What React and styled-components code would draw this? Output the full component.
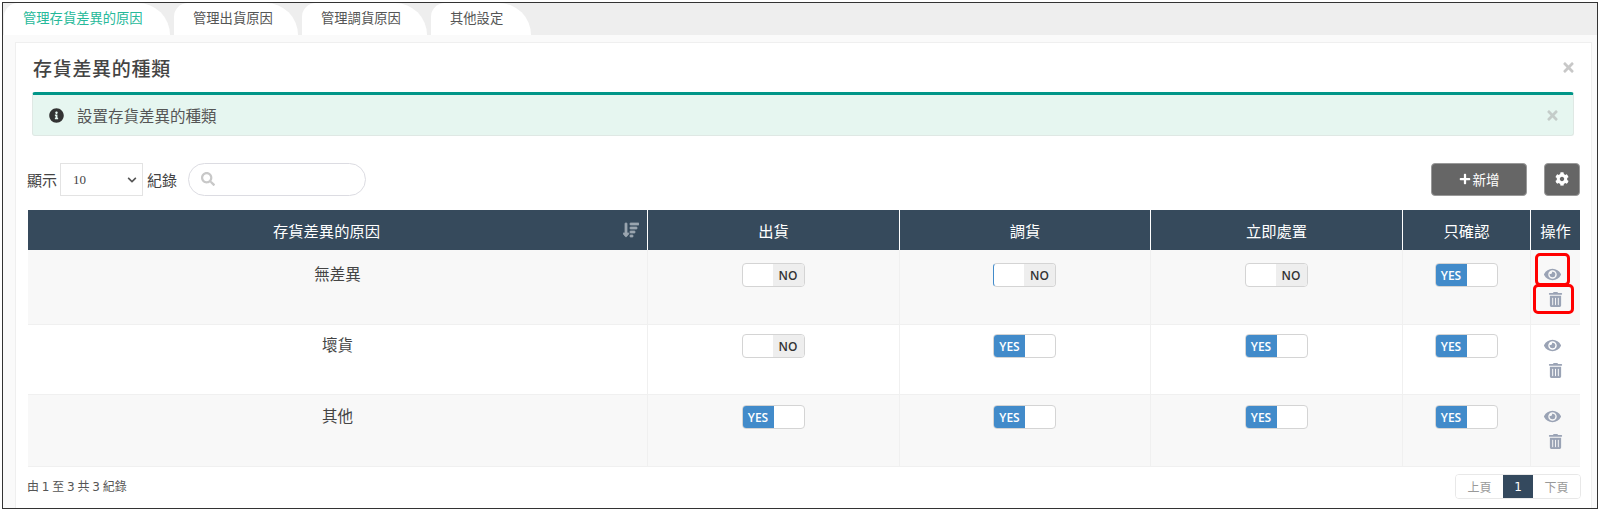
import React from 'react';
import styled, { createGlobalStyle } from 'styled-components';
import { FaInfoCircle, FaTimes, FaPlus, FaCog, FaSearch, FaEye, FaTrashAlt, FaSortAmountDown, FaChevronDown } from 'react-icons/fa';

const tabs = [
  { label: '管理存貨差異的原因', width: 166 },
  { label: '管理出貨原因', width: 124 },
  { label: '管理調貨原因', width: 125 },
  { label: '其他設定', width: 100 },
];

const rows = [
  { name: '無差異', out: false, move: false, now: false, ok: true, padTop: 13, height: 75 },
  { name: '壞貨', out: false, move: true, now: true, ok: true, padTop: 9, height: 70 },
  { name: '其他', out: true, move: true, now: true, ok: true, padTop: 10, height: 72 },
];

const App = () => (
  <>
    <GlobalStyle />
    <Frame>
      <TabBar>
        {tabs.map((tab, i) => (
          <Tab key={tab.label} $active={i === 0} $width={tab.width}>{tab.label}</Tab>
        ))}
      </TabBar>
      <Panel>
        <TitleRow>
          <Title>存貨差異的種類</Title>
          <FaTimes />
        </TitleRow>
        <Alert>
          <FaInfoCircle />
          <AlertText>設置存貨差異的種類</AlertText>
          <AlertClose><FaTimes /></AlertClose>
        </Alert>
        <Toolbar>
          <Label>顯示</Label>
          <Select>
            10
            <FaChevronDown />
          </Select>
          <Label>紀錄</Label>
          <Search><FaSearch /></Search>
          <Spacer />
          <AddButton><FaPlus />新增</AddButton>
          <GearButton><FaCog /></GearButton>
        </Toolbar>
        <Table>
          <HeadRow>
            <HeadCell $first>
              存貨差異的原因
              <SortIcon><FaSortAmountDown /></SortIcon>
            </HeadCell>
            <HeadCell>出貨</HeadCell>
            <HeadCell>調貨</HeadCell>
            <HeadCell>立即處置</HeadCell>
            <HeadCell>只確認</HeadCell>
            <HeadCell>操作</HeadCell>
          </HeadRow>
          {rows.map((row, i) => (
            <BodyRow key={row.name} $striped={i !== 1} $height={row.height}>
              <NameCell $top={row.padTop}>{row.name}</NameCell>
              {[row.out, row.move, row.now, row.ok].map((on, j) => (
                <Cell key={j} $top={row.padTop}>
                  <Toggle $edge={i === 0 && j === 1}>
                    {on ? <YesPart>YES</YesPart> : <BlankPart />}
                    {on ? <BlankPart /> : <NoPart>NO</NoPart>}
                  </Toggle>
                </Cell>
              ))}
              <ActionCell $top={row.padTop}>
                <EyeIcon $marked={i === 0}><FaEye /></EyeIcon>
                <TrashIcon $marked={i === 0}><FaTrashAlt /></TrashIcon>
              </ActionCell>
            </BodyRow>
          ))}
        </Table>
        <Footer>
          <FooterText>由 1 至 3 共 3 紀錄</FooterText>
          <Pager>
            <PageLink>上頁</PageLink>
            <PageLink $active>1</PageLink>
            <PageLink>下頁</PageLink>
          </Pager>
        </Footer>
      </Panel>
    </Frame>
  </>
);

export default App;

const columns = '619px 252px 251px 252px 128px 1fr';

const GlobalStyle = createGlobalStyle`
  html, body {
    margin: 0;
    padding: 0;
    background: #fff;
  }
  *, *::after {
    box-sizing: border-box;
  }
  body {
    font-family: "Open Sans", "Noto Sans CJK TC", sans-serif;
    color: #444;
  }
`;

const Frame = styled.div`
  margin: 2px;
  width: 1596px;
  height: 507px;
  border: 1.5px solid #333;
  background: #fafafa;
  overflow: hidden;
`;

const TabBar = styled.div`
  display: flex;
  gap: 4px;
  height: 32px;
  background: #eee;
  padding-left: 1px;
`;

const Tab = styled.div`
  width: ${p => p.$width}px;
  height: 32px;
  background: #fff;
  border-radius: 14px 32px 0 0;
  color: ${p => (p.$active ? '#26b99a' : '#555')};
  font-size: 13.3px;
  line-height: 31px;
  padding-left: 19px;
`;

const Panel = styled.div`
  margin: 7px 5px 0 12px;
  height: 470px;
  background: #fff;
  border: 1px solid #efefef;
  padding: 0 11px 0 12px;
`;

const TitleRow = styled.div`
  display: flex;
  justify-content: space-between;
  align-items: center;
  height: 49px;
  padding: 0 4px 0 5px;
  color: #c8c8c8;
  font-size: 15px;
`;

const Title = styled.h2`
  margin: 0;
  font-size: 19px;
  letter-spacing: 0.7px;
  font-weight: 500;
  color: #444;
`;

const Alert = styled.div`
  display: flex;
  align-items: center;
  height: 44px;
  margin: 0 6px 0 4px;
  padding: 0 13px 0 16px;
  background: #e6f6f0;
  border: 1px solid #dfe8e4;
  border-top: 3px solid #009688;
  border-radius: 3px;
  color: #333;
  font-size: 15px;
`;

const AlertText = styled.span`
  margin-left: 13px;
  font-size: 15.5px;
  color: #555;
`;

const AlertClose = styled.span`
  margin-left: auto;
  color: #c4ccc9;
  font-size: 15px;
  display: flex;
`;

const Toolbar = styled.div`
  display: flex;
  align-items: center;
  height: 34px;
  margin: 26px 0 0 -1px;
  color: #444;
`;

const Label = styled.span`
  font-size: 15px;
  color: #444;
`;

const Select = styled.div`
  display: flex;
  align-items: center;
  justify-content: space-between;
  width: 83px;
  height: 33px;
  margin: 1px 4px 0 3px;
  padding: 0 5px 0 12px;
  border: 1px solid #e3e3e3;
  background: #fff;
  font-family: "Liberation Serif", serif;
  font-size: 13px;
  color: #444;
  svg {
    font-size: 10px;
    color: #555;
  }
`;

const Search = styled.div`
  display: flex;
  align-items: center;
  width: 178px;
  height: 33px;
  margin-left: 11px;
  padding-left: 12px;
  border: 1px solid #dcdce2;
  border-radius: 17px;
  color: #c8c8c8;
  font-size: 14px;
`;

const Spacer = styled.div`
  flex: 1;
`;

const AddButton = styled.div`
  display: flex;
  align-items: center;
  justify-content: center;
  gap: 2px;
  width: 96px;
  height: 33px;
  padding-bottom: 1px;
  background: #666;
  border: 1px solid #999;
  border-radius: 4px;
  color: #fff;
  font-size: 13.5px;
  svg {
    font-size: 12px;
  }
`;

const GearButton = styled(AddButton)`
  width: 36px;
  margin-left: 17px;
  svg {
    font-size: 14px;
  }
`;

const Table = styled.div`
  margin-top: 14px;
`;

const HeadRow = styled.div`
  display: grid;
  grid-template-columns: ${columns};
  height: 40px;
  background: #364a5c;
`;

const HeadCell = styled.div`
  position: relative;
  display: flex;
  align-items: center;
  justify-content: center;
  color: #fff;
  font-size: 15.3px;
  border-left: ${p => (p.$first ? '0' : '1px solid #fff')};
  padding-right: ${p => (p.$first ? '22px' : '0')};
`;

const SortIcon = styled.span`
  position: absolute;
  right: 8px;
  top: 12px;
  display: flex;
  font-size: 16px;
  color: #9aa5af;
  svg {
    stroke-width: 25;
  }
`;

const BodyRow = styled.div`
  display: grid;
  grid-template-columns: ${columns};
  height: ${p => p.$height}px;
  background: ${p => (p.$striped ? '#f8f8f8' : '#fff')};
  border-bottom: 1px solid #f0f0f0;
`;

const Cell = styled.div`
  display: flex;
  justify-content: center;
  align-items: flex-start;
  padding-top: ${p => p.$top}px;
  padding-right: 1px;
  border-left: 1px solid #f0f0f0;
`;

const NameCell = styled(Cell)`
  padding-top: ${p => p.$top - 1}px;
  padding-right: 0;
  font-size: 15.5px;
  color: #444;
  border-left: 0;
`;

const Toggle = styled.div`
  display: flex;
  width: 63px;
  height: 24px;
  border: 1px solid #d4d4d4;
  border-left: ${p => (p.$edge ? '1px solid #428bca' : '1px solid #d4d4d4')};
  border-radius: 4px;
  overflow: hidden;
  background: #fff;
  font-size: 12px;
  font-weight: 600;
`;

const YesPart = styled.span`
  display: flex;
  align-items: center;
  justify-content: center;
  width: 31px;
  background: #428bca;
  color: #fff;
`;

const NoPart = styled(YesPart)`
  background: #eee;
  color: #333;
`;

const BlankPart = styled.span`
  flex: 1;
`;

const ActionCell = styled(Cell)`
  flex-direction: column;
  justify-content: flex-start;
  align-items: center;
  padding-top: ${p => p.$top + 2}px;
  padding-right: 6px;
  color: #9aa3b5;
`;

const EyeIcon = styled.span`
  position: relative;
  display: flex;
  justify-content: center;
  height: 27px;
  font-size: 17px;
  padding-top: 1px;
  ${p => p.$marked && `
    &::after {
      content: "";
      position: absolute;
      left: -9px;
      top: -12px;
      width: 35px;
      height: 33px;
      border: 3px solid #f00;
      border-radius: 5px;
    }
  `}
`;

const TrashIcon = styled.span`
  position: relative;
  display: flex;
  justify-content: center;
  margin-left: 6px;
  font-size: 15px;
  ${p => p.$marked && `
    &::after {
      content: "";
      position: absolute;
      left: -15px;
      top: -8px;
      width: 41px;
      height: 30px;
      border: 3px solid #f00;
      border-radius: 5px;
    }
  `}
`;

const Footer = styled.div`
  display: flex;
  justify-content: space-between;
  align-items: center;
  margin: 7px -1px 0 -1px;
`;

const FooterText = styled.span`
  font-family: "DejaVu Sans", "Noto Sans CJK TC", sans-serif;
  font-size: 12px;
  word-spacing: -1px;
  padding-bottom: 3px;
  color: #555;
`;

const Pager = styled.div`
  display: flex;
  height: 25px;
  border: 1px solid #e8e8e8;
  border-radius: 4px;
  overflow: hidden;
`;

const PageLink = styled.span`
  display: flex;
  align-items: center;
  justify-content: center;
  width: ${p => (p.$active ? 30 : 47)}px;
  font-family: "DejaVu Sans", "Noto Sans CJK TC", sans-serif;
  font-size: 12px;
  background: ${p => (p.$active ? '#34495e' : '#fff')};
  color: ${p => (p.$active ? '#fff' : '#999')};
`;
